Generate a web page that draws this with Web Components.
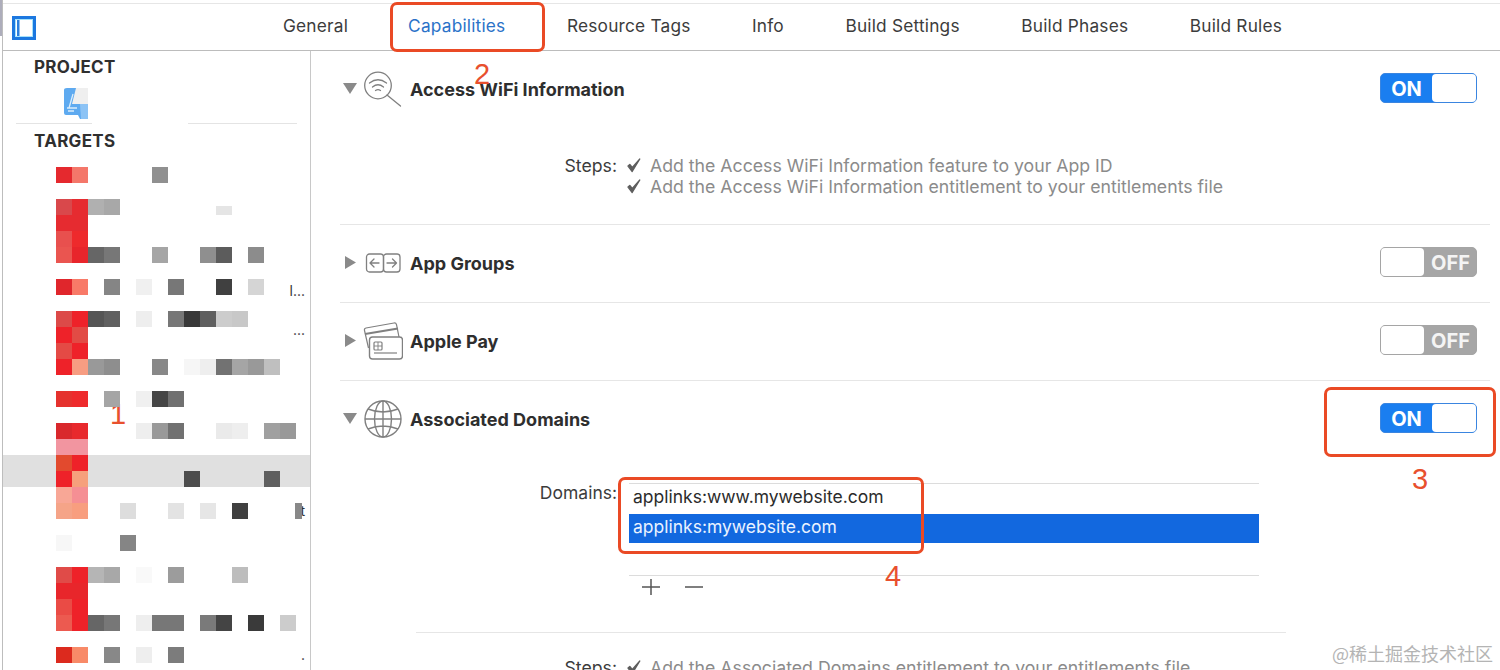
<!DOCTYPE html>
<html>
<head>
<meta charset="utf-8">
<title>Capabilities</title>
<style>
  html, body { margin: 0; height: 670px; overflow: hidden; background: #fff; }
  body { font-family: Inter, "Noto Sans", sans-serif; color: #2b2b2b; position: relative; background: linear-gradient(#adadbb, #adadbb) 0 0 / 2px 36px no-repeat #fff; }
</style>
</head>
<body>
<xcode-shell>
  <tab-bar slot="tabs">
    <tab-item>General</tab-item>
    <tab-item active>Capabilities</tab-item>
    <tab-item>Resource Tags</tab-item>
    <tab-item>Info</tab-item>
    <tab-item>Build Settings</tab-item>
    <tab-item>Build Phases</tab-item>
    <tab-item>Build Rules</tab-item>
  </tab-bar>
  <target-sidebar slot="sidebar"></target-sidebar>

  <capability-row title="Access WiFi Information" icon="wifi" state="on" open>
    <steps-list>
      <step-line>Add the Access WiFi Information feature to your App ID</step-line>
      <step-line>Add the Access WiFi Information entitlement to your entitlements file</step-line>
    </steps-list>
  </capability-row>
  <capability-row title="App Groups" icon="groups" state="off"></capability-row>
  <capability-row title="Apple Pay" icon="pay" state="off"></capability-row>
  <capability-row title="Associated Domains" icon="globe" state="on" open last>
    <domain-table>
      <domain-line>applinks:www.mywebsite.com</domain-line>
      <domain-line selected>applinks:mywebsite.com</domain-line>
    </domain-table>
    <steps-list divided>
      <step-line>Add the Associated Domains entitlement to your entitlements file</step-line>
    </steps-list>
  </capability-row>
</xcode-shell>

<red-frame style="left:390px;top:2px;width:155px;height:50px"></red-frame>
<red-frame style="left:1324px;top:387px;width:172px;height:70px"></red-frame>
<red-frame style="left:618px;top:477px;width:306px;height:77px"></red-frame>
<red-number style="left:474px;top:57px">2</red-number>
<red-number style="left:110px;top:397px">1</red-number>
<red-number style="left:1412px;top:462px">3</red-number>
<red-number style="left:885px;top:559px">4</red-number>
<site-mark>@稀土掘金技术社区</site-mark>

<script>
const ICONS = {
  wifi: `<svg width="38" height="38" viewBox="0 0 38 38" fill="none" stroke="#808080" stroke-width="1.3" stroke-linecap="round">
    <circle cx="14" cy="15.500" r="13.300"/><path d="M23 25 36.500 36"/>
    <path d="M5.500 13Q14 6.500 22.500 13M8.500 17Q14 12.500 19.500 17M11.500 20.500Q14 18.800 16.500 20.500"/></svg>`,
  groups: `<svg width="38" height="20" viewBox="0 0 38 20" fill="none" stroke="#808080" stroke-width="1.3" stroke-linecap="round" stroke-linejoin="round">
    <rect x="2.500" y="1" width="17" height="18" rx="3"/><rect x="19.500" y="1" width="16.500" height="18" rx="3"/>
    <path d="M15 10H6.500M10 6 6 10 10 14M23 10H32M28.500 6 32.500 10 28.500 14"/></svg>`,
  pay: `<svg width="40" height="38" viewBox="0 0 40 38" fill="none" stroke="#808080" stroke-width="1.2" stroke-linejoin="round">
    <path d="M5.500 26 1.500 8.500Q1 6.500 3 6L31 1Q33 .7 33.500 2.700L36 15"/><path d="M2 12 35 6.500" stroke-width="2"/>
    <rect x="6.500" y="15" width="33" height="22" rx="3" fill="#fff" stroke-width="1.4"/>
    <rect x="11" y="20" width="8" height="8" rx="1"/><path d="M11 24H19M15 20V28" stroke-width=".9"/><path d="M11 31H34"/></svg>`,
  globe: `<svg width="40" height="40" viewBox="0 0 40 40" fill="none" stroke="#808080" stroke-width="1.4">
    <circle cx="20" cy="20" r="18"/><ellipse cx="20" cy="20" rx="8.500" ry="18"/>
    <path d="M20 2V38M2 20H38M5 10Q20 16 35 10M5 30Q20 24 35 30"/></svg>`
};

// mosaic cells of the blurred target list: row -> "col:colour"
const CELLS = {
  0: '0:e5292e 1:f4776a 6:909090',
  2: '0:d9484b 1:e62b30 2:b0b0b0 3:a8a8a8',
  3: '0:e62b30 1:e62b30',
  4: '0:e8504e 1:ee2a2c',
  5: '0:ea5550 1:e8252b 2:666666 3:777777 6:a5a5a5 9:8f8f8f 10:5c5c5c 12:8c8c8c',
  7: '0:e0262c 1:f87a68 3:858585 5:f0f0f0 7:777777 10:404040 12:d5d5d5',
  9: '0:dc4a48 1:ee2229 2:555555 3:606060 5:eeeeee 7:777777 8:383838 9:5f5f5f 10:cccccc 11:c8c8c8',
  10: '0:ee2229 1:e24b45',
  11: '0:e44a45 1:ee2229',
  12: '0:ee2229 1:f79d82 2:999999 3:8e8e8e 6:888888 8:f6f6f6 9:eeeeee 10:727272 11:a5a5a5 12:999999 13:bfbfbf',
  14: '0:e5322e 1:ee2a2c 3:a5a5a5 5:f0f0f0 6:454545 7:707070',
  16: '0:d9282c 1:e8292d 5:eeeeee 6:999999 7:717171 10:eaeaea 11:eeeeee 13:a0a0a0 14:999999',
  17: '0:f295a0 1:f295a0',
  18: '0:e24a2e 1:ee2229',
  19: '0:ee2229 1:f6a07c 8:4d4d4d 13:5f5f5f',
  20: '0:f8a796 1:f58f94',
  21: '0:f5a488 1:f89e7f 4:dddddd 7:e3e3e3 9:e6e6e6 11:404040',
  23: '0:f7f7f7 4:858585',
  25: '0:e04b48 1:ee2229 2:b5b5b5 3:a8a8a8 5:f9f9f9 7:9c9c9c 11:bdbdbd',
  26: '0:e8262b 1:e8262b',
  27: '0:ea4b45 1:ee2229',
  28: '0:ec5a50 1:ee2229 2:666666 3:777777 5:eeeeee 6:777777 7:777777 9:7a7a7a 10:444444 12:3a3a3a 14:cccccc',
  30: '0:dc2a1e 1:f88a68 3:888888 5:eeeeee 7:7c7c7c'
};

class XcodeShell extends HTMLElement {
  constructor() {
    super();
    this.attachShadow({ mode: 'open' }).innerHTML = `
      <style>
        :host { display: flex; flex-direction: column; height: 670px; overflow: hidden; margin-left: 2px; border-left: 1px solid #bdbdbd; }
        .body { display: flex; flex: 1; min-height: 0; }
        main { flex: 1; min-width: 0; }
      </style>
      <slot name="tabs"></slot>
      <div class="body">
        <slot name="sidebar"></slot>
        <main><slot></slot></main>
      </div>`;
  }
}

class TabBar extends HTMLElement {
  constructor() {
    super();
    this.attachShadow({ mode: 'open' }).innerHTML = `
      <style>
        :host { display: flex; align-items: center; flex: none; box-sizing: border-box; height: 48px; margin-top: 3px; border-top: 1px solid #e6e6e6; border-bottom: 1px solid #bcbcbc; }
        .toggle { margin-left: 9px; width: 24px; height: 24px; margin-top: 2px; display: block; }
        .tabs { display: flex; gap: 61.5px; margin-left: 247px; margin-top: -4px; }
        ::slotted(:first-child) { margin-right: -1.5px; }
      </style>
      <svg class="toggle" viewBox="0 0 24 24">
        <rect x="1.500" y="1.500" width="21" height="21" fill="#fff" stroke="#1c78e0" stroke-width="3"/>
        <rect x="3.500" y="3.500" width="17" height="17" fill="none" stroke="#a5e2fb" stroke-width="1"/>
        <rect x="5" y="4" width="2.500" height="16" fill="#2a80de"/>
      </svg>
      <div class="tabs"><slot></slot></div>`;
  }
}

class TabItem extends HTMLElement {
  constructor() {
    super();
    this.attachShadow({ mode: 'open' }).innerHTML = `
      <style>
        :host { display: block; font-size: 17.300px; letter-spacing: .2px; color: #3c3c3c; white-space: nowrap; }
        :host([active]) { color: #2a72c8; }
      </style>
      <slot></slot>`;
  }
}

class TargetSidebar extends HTMLElement {
  constructor() {
    super();
    this.attachShadow({ mode: 'open' }).innerHTML = `
      <style>
        :host { display: block; box-sizing: border-box; flex: none; width: 308px; height: 619px; overflow: hidden; border-right: 1px solid #c8c8c8; }
        h4 { margin: 0; padding-left: 31px; font-size: 17px; line-height: 20px; font-weight: 700; color: #2f2f2f; letter-spacing: .3px; }
        .project { margin-top: 6px; }
        .app { display: block; margin: 11px 0 0 61px; }
        .rule { display: flex; justify-content: space-between; margin: 3px 13px 0 13px; }
        .rule i { height: 1px; background: #e4e4e4; }
        .rule i:first-child { width: 76px; }
        .rule i:last-child { width: 109px; }
        .targets { margin-top: 7px; }
        target-mosaic { margin-top: 16px; }
      </style>
      <h4 class="project">PROJECT</h4>
      <svg class="app" width="24" height="32" viewBox="0 0 24 32">
        <rect x="8" y="0" width="16" height="16" fill="#efefef"/>
        <path d="M0 2Q0 0 3 0H12L8 16H24V31H16L14 27H2Q0 27 0 25Z" fill="#5eaaf0"/>
        <path d="M16 16H24V31H17Z" fill="#8cc3f5"/>
        <path d="M9 6 5 20M3 20H13M4 23H10" stroke="#d9edfc" stroke-width="1.300" fill="none"/>
      </svg>
      <div class="rule"><i></i><i></i></div>
      <h4 class="targets">TARGETS</h4>
      <target-mosaic></target-mosaic>`;
  }
}

class TargetMosaic extends HTMLElement {
  constructor() {
    super();
    const root = this.attachShadow({ mode: 'open' });
    root.innerHTML = `
      <style>
        :host { display: grid; grid-template-columns: 53px repeat(16, 16px); grid-auto-rows: 16px; }
        .band { grid-column: 1 / -1; grid-row: 19 / span 2; background: #e0e0e0; }
        .cell { z-index: 1; }
        .note { z-index: 1; grid-column: 16 / span 2; font-size: 14px; line-height: 16px; color: #333; text-align: right; padding-right: 7px; white-space: nowrap; }
      </style>
      <div class="band"></div>`;
    for (const row of Object.keys(CELLS)) {
      for (const item of CELLS[row].split(' ')) {
        const [col, colour] = item.split(':');
        const cell = document.createElement('div');
        cell.className = 'cell';
        cell.style.cssText = `grid-row:${+row + 1};grid-column:${+col + 2};background:#${colour}`;
        root.appendChild(cell);
      }
    }
    // leftovers of the list texts that the blur did not hide
    [[7, 'l...', 4], [10, '...', -5], [21, 't', 0], [30, '.', 0]].forEach(([row, text, shift]) => {
      const note = document.createElement('div');
      note.className = 'note';
      note.style.gridRow = row + 1;
      note.style.marginTop = shift + 'px';
      note.textContent = text;
      root.appendChild(note);
    });
    const stub = document.createElement('div');
    stub.className = 'cell';
    stub.style.cssText = 'grid-row:22;grid-column:17;background:#888;width:7px;margin-left:-1px';
    root.appendChild(stub);
    const speck = document.createElement('div');
    speck.className = 'cell';
    speck.style.cssText = 'grid-row:3;grid-column:12;background:#e5e5e5;height:9px;margin-top:7px';
    root.appendChild(speck);
  }
}

class CapabilityRow extends HTMLElement {
  constructor() {
    super();
    const open = this.hasAttribute('open');
    const tri = open
      ? '<svg width="14" height="11" viewBox="0 0 14 11"><path d="M0 0H14L7 11Z" fill="#8a8a8a"/></svg>'
      : '<svg width="11" height="13" viewBox="0 0 11 13"><path d="M0 0 11 6.500 0 13Z" fill="#8a8a8a"/></svg>';
    this.attachShadow({ mode: 'open' }).innerHTML = `
      <style>
        :host { display: block; margin: 0 10px 0 29px; border-bottom: 1px solid #e6e6e6; }
        :host([last]) { border-bottom: 0; }
        header { display: flex; align-items: center; height: 30px; padding: 22px 13px 25px 0; }
        .tri { width: 24px; display: flex; justify-content: center; flex: none; margin-left: -2px; }
        .icon { width: 44px; height: 30px; flex: none; display: flex; align-items: center; justify-content: center; margin-left: -1px; margin-right: 1px; }
        .icon svg { flex: none; transform: translateY(1px); }
        h3 { margin: 3px 0 0 4px; flex: 1; font-size: 18px; font-weight: 700; color: #2e2e2e; white-space: nowrap; }
      </style>
      <header>
        <div class="tri">${tri}</div>
        <div class="icon">${ICONS[this.getAttribute('icon')]}</div>
        <h3>${this.getAttribute('title')}</h3>
        <on-off state="${this.getAttribute('state')}"></on-off>
      </header>
      <slot></slot>`;
  }
}

class OnOff extends HTMLElement {
  constructor() {
    super();
    const on = this.getAttribute('state') === 'on';
    this.attachShadow({ mode: 'open' }).innerHTML = `
      <style>
        :host { display: flex; flex: none; box-sizing: border-box; width: 97px; height: 30px; border-radius: 5px; border: 1.5px solid ${on ? '#3a85e0' : '#a5a5a5'}; background: ${on ? '#1a7ef0' : '#a6a6a6'}; overflow: hidden; }
        span { flex: 1; text-align: center; color: #fff; font-weight: 700; font-size: 20px; line-height: 30px; ${on ? '' : 'color:#f4f4f4;margin-left:1px'} }
        i { display: block; flex: none; width: ${on ? 44 : 43}px; background: #fff; border-radius: ${on ? '4px 0 0 4px' : '0 4px 4px 0'}; }
      </style>
      ${on ? `<span>ON</span><i></i>` : `<i></i><span>OFF</span>`}`;
  }
}

class StepsList extends HTMLElement {
  constructor() {
    super();
    this.attachShadow({ mode: 'open' }).innerHTML = `
      <style>
        :host { display: grid; grid-template-columns: 277px 1fr; column-gap: 10px; padding: 27px 0 27px; font-size: 17.700px; line-height: 21px; }
        :host([divided]) { margin-left: 76px; margin-right: 204px; grid-template-columns: 201px 1fr; border-top: 1px solid #e6e6e6; margin-top: 37px; padding-top: 24px; }
        label { text-align: right; color: #3c3c3c; }
      </style>
      <label>Steps:</label>
      <div><slot></slot></div>`;
  }
}

class StepLine extends HTMLElement {
  constructor() {
    super();
    this.attachShadow({ mode: 'open' }).innerHTML = `
      <style>
        :host { display: flex; align-items: center; height: 21px; color: #8b8b8b; white-space: nowrap; }
        svg { flex: none; margin-right: 9px; }
      </style>
      <svg width="14" height="15" viewBox="0 0 14 15"><path d="M1 8 5.200 13.500 12.800 1 5.300 9.500 2.800 6.500Z" fill="#5e5e5e" stroke="#5e5e5e" stroke-width="1.300" stroke-linejoin="round"/></svg>
      <slot></slot>`;
  }
}

class DomainTable extends HTMLElement {
  constructor() {
    super();
    this.attachShadow({ mode: 'open' }).innerHTML = `
      <style>
        :host { display: grid; grid-template-columns: 277px 630px; column-gap: 12px; padding-top: 25px; font-size: 17.500px; }
        label { text-align: right; color: #3c3c3c; line-height: 21px; margin-top: -1px; }
        .list { border-top: 1px solid #dcdcdc; }
        .rows { height: 91px; border-bottom: 1px solid #dcdcdc; }
        .tools { display: flex; gap: 23px; padding: 3px 0 0 12px; }
      </style>
      <label>Domains:</label>
      <div class="list">
        <div class="rows"><slot></slot></div>
        <div class="tools">
          <svg width="20" height="16" viewBox="0 0 20 16"><path d="M10 0V16M1 8H19" stroke="#555" stroke-width="1.500"/></svg>
          <svg width="20" height="16" viewBox="0 0 20 16"><path d="M1 8H19" stroke="#555" stroke-width="1.500"/></svg>
        </div>
      </div>`;
  }
}

class DomainLine extends HTMLElement {
  constructor() {
    super();
    this.attachShadow({ mode: 'open' }).innerHTML = `
      <style>
        :host { display: block; height: 30px; line-height: 26px; padding-left: 4px; color: #2b2b2b; white-space: nowrap; }
        :host([selected]) { height: 29px; background: #1268df; color: #eaf3ff; }
      </style>
      <slot></slot>`;
  }
}

class RedFrame extends HTMLElement {
  constructor() {
    super();
    this.attachShadow({ mode: 'open' }).innerHTML = `
      <style>
        :host { display: block; position: absolute; box-sizing: border-box; border: 3px solid #ea4a25; border-radius: 7px; }
      </style>`;
  }
}

class RedNumber extends HTMLElement {
  constructor() {
    super();
    this.attachShadow({ mode: 'open' }).innerHTML = `
      <style>
        :host { display: block; position: absolute; font: 29px/34px "Liberation Sans", sans-serif; color: #e8502e; }
      </style>
      <slot></slot>`;
  }
}

class SiteMark extends HTMLElement {
  constructor() {
    super();
    this.attachShadow({ mode: 'open' }).innerHTML = `
      <style>
        :host { display: block; position: absolute; right: 7px; bottom: 5px; font: 18px/24px "Noto Sans CJK SC", sans-serif; color: #b4b4b4; white-space: nowrap; }
      </style>
      <slot></slot>`;
  }
}

customElements.define('xcode-shell', XcodeShell);
customElements.define('tab-bar', TabBar);
customElements.define('tab-item', TabItem);
customElements.define('target-mosaic', TargetMosaic);
customElements.define('target-sidebar', TargetSidebar);
customElements.define('capability-row', CapabilityRow);
customElements.define('on-off', OnOff);
customElements.define('steps-list', StepsList);
customElements.define('step-line', StepLine);
customElements.define('domain-table', DomainTable);
customElements.define('domain-line', DomainLine);
customElements.define('red-frame', RedFrame);
customElements.define('red-number', RedNumber);
customElements.define('site-mark', SiteMark);
</script>
</body>
</html>
